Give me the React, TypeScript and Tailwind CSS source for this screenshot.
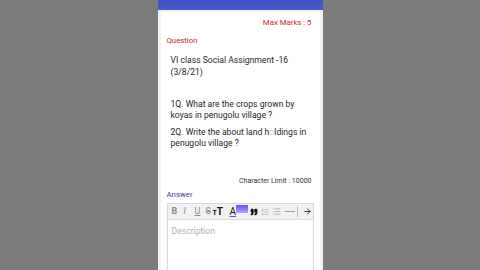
import { ArrowRight, List, ListOrdered, Quote } from "lucide-react";

const font = { fontFamily: "Roboto, 'Noto Sans', sans-serif" };

export default function App() {
  return (
    <div
      className="w-[480px] h-[270px] overflow-hidden bg-[#7b7b7b] flex justify-center"
      style={font}
    >
      <div className="w-[165px] h-full flex flex-col bg-[#f3f3f5]">
        <div className="h-[10px] shrink-0 bg-gradient-to-b from-[#3f51c4] to-[#4a5bc9]" />
        <div className="flex-1 mx-[3px] mt-[2px] bg-white px-[6px] pt-[5px] text-[#222]">
          <div className="flex justify-end pr-[2px] text-[7.8px] leading-[12px] text-[#d0262f]">
            Max Marks : 5
          </div>
          <div className="mt-[6px] text-[7.8px] leading-[12px] text-[#c62b2b]">Question</div>
          <div className="mt-[7px] pl-[4px] text-[8.6px] leading-[12px] text-[#262626]">
            <p>
              VI class Social Assignment -16
              <br />
              (3/8/21)
            </p>
            <p className="mt-[21px] leading-[11px]">
              1Q. What are the crops grown by
              <br />
              koyas in penugolu village ?
            </p>
            <p className="mt-[6px] leading-[11px]">
              2Q. Write the about land h◌ldings in
              <br />
              penugolu village ?
            </p>
          </div>
          <div className="mt-[27px] flex justify-end pr-[2px] text-[7px] leading-[10px] text-[#333]">
            Character Limit : 10000
          </div>
          <div className="mt-[4px] text-[7.8px] leading-[10px] text-[#3b3b9e]">Answer</div>
          <div className="mt-[3px] border border-[#d8d8d8]">
            <div className="h-[16px] bg-[#f1f1f1] border-b border-[#dcdcdc] flex items-center pl-[4px] text-[9px] text-[#8a8a8a]">
              <span className="w-[12px] font-bold">B</span>
              <span className="w-[11px] italic">I</span>
              <span className="w-[11px] underline">U</span>
              <span className="w-[7px] line-through">S</span>
              <span className="w-[17px] font-bold text-[#111] text-[10px] leading-none">
                <span className="text-[7px]">T</span>T
              </span>
              <span className="w-[6px] text-[#111] text-[10px] leading-none underline decoration-[#6a4bd6]">A</span>
              <span className="w-[12px] h-[8px] bg-gradient-to-b from-[#6e4ef0] to-[#b3a2ff] -mt-[5px] mr-[2px]" />
              <span className="w-[11px] flex"><Quote size={8} className="text-[#111] fill-[#111]" strokeWidth={2} /></span>
              <span className="w-[11px] flex"><ListOrdered size={8} strokeWidth={1.5} /></span>
              <span className="w-[13px] flex"><List size={9} strokeWidth={1.5} /></span>
              <span className="w-[10px] h-px bg-[#999]" />
              <span className="w-px h-[11px] bg-[#bbb] ml-[2px] mr-[5px]" />
              <ArrowRight size={9} className="text-[#111]" strokeWidth={2.2} />
            </div>
            <div className="h-[60px] px-[4px] pt-[5px] text-[8.6px] text-[#b0b0b0]">Description</div>
          </div>
        </div>
      </div>
    </div>
  );
}
